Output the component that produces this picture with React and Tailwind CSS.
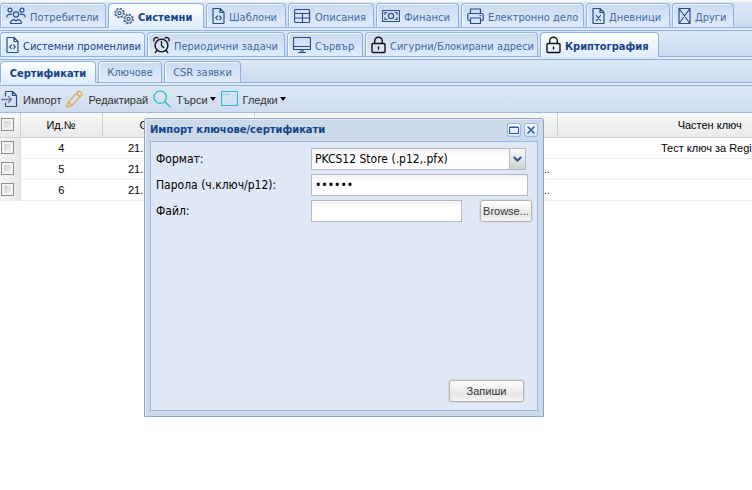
import React from "react";

const UI = "font-['DejaVu_Sans_Condensed','DejaVu_Sans',sans-serif]";
const ARIAL = "font-['Liberation_Sans',sans-serif]";

function Svg({ w, h = 18, className = "text-[#2b4e86]", children }) {
  return (
    <svg width={w} height={h} viewBox={`0 0 ${w} ${h}`} fill="none" stroke="currentColor" strokeWidth="1.2" strokeLinecap="round" strokeLinejoin="round" className={`shrink-0 ${className}`} aria-hidden="true">
      {children}
    </svg>
  );
}

const Users = () => (
  <Svg w={20}>
    <circle cx="4" cy="3.200" r="2" />
    <circle cx="16" cy="3.200" r="2" />
    <circle cx="10" cy="7.500" r="2.700" />
    <path d="M.8 10c0-2.300 1.700-3 4.700-2.800M19.200 10c0-2.300-1.700-3-4.700-2.800M4.600 16.500c0-2.700 1.700-3.700 3.400-3.900l2 1.300 2-1.300c1.700.2 3.400 1.200 3.400 3.900z" />
  </Svg>
);
const Gears = () => (
  <Svg w={20} className="text-[#4a6288]">
    <circle cx="5.500" cy="6" r="4.600" strokeWidth="1.400" strokeDasharray="2 1.610" strokeLinecap="butt" />
    <circle cx="5.500" cy="6" r="3.800" strokeWidth=".8" />
    <circle cx="5.500" cy="6" r="1.600" />
    <circle cx="14.500" cy="12" r="4.600" strokeWidth="1.400" strokeDasharray="2 1.610" strokeLinecap="butt" />
    <circle cx="14.500" cy="12" r="3.800" strokeWidth=".8" />
    <circle cx="14.500" cy="12" r="1.600" />
  </Svg>
);
const FileCode = () => (
  <Svg w={13}>
    <path d="M1.500 1.500h6.500l4 4v10.500q0 .5-.5.5h-10q-.5 0-.5-.5v-14q0-.5.5-.5zM8 1.500v4h4" />
    <path d="M5.300 9l-1.600 1.800 1.600 1.800M7.700 9l1.600 1.800-1.600 1.800" />
  </Svg>
);
const FileX = () => (
  <Svg w={13}>
    <path d="M1.500 1.500h6.500l4 4v10.500q0 .5-.5.5h-10q-.5 0-.5-.5v-14q0-.5.5-.5zM8 1.500v4h4M4.500 8.500l4 5M8.500 8.500l-4 5" />
  </Svg>
);
const TableIcon = () => (
  <Svg w={17}>
    <rect x=".5" y="2.500" width="15" height="13" rx="1" />
    <path d="M1 6.500h15M1 11h15M8.500 6.500v9" />
  </Svg>
);
const Money = () => (
  <Svg w={18}>
    <rect x=".5" y="3.500" width="17" height="11" rx=".5" />
    <circle cx="9" cy="9" r="2.600" />
    <path d="M3 7.500V5.500H5M15 7.500V5.500H13M3 10.500v2H5M15 10.500v2H13" />
  </Svg>
);
const Printer = () => (
  <Svg w={17}>
    <path d="M3.500 6.500v-4.500h10v4.500M3.500 13.500h-1.500q-1.200 0-1.200-1.200v-4.600q0-1.200 1.200-1.200h13q1.200 0 1.200 1.200v4.600q0 1.200-1.200 1.200h-1.500M3.500 11h10v5.500h-10zM13 8.700h.8" />
  </Svg>
);
const BoxX = () => (
  <Svg w={13}>
    <path d="M1 1.500h11v15h-11zM1 1.500l11 15M12 1.500l-11 15" />
  </Svg>
);
const Alarm = () => (
  <Svg w={17} className="text-[#111]">
    <circle cx="8.500" cy="9.500" r="6.400" strokeWidth="1.400" />
    <path d="M8.500 5.500v4.200l2.200 1.800M1 5a2.600 2.600 0 0 1 4-3M16 5a2.600 2.600 0 0 0-4-3M4 14.500l-1.700 2M13 14.500l1.700 2" strokeWidth="1.300" />
  </Svg>
);
const Monitor = () => (
  <Svg w={18}>
    <rect x=".5" y="1.500" width="17" height="12" rx=".5" />
    <path d="M1 10.500h16M8 13.500v2.500M10 13.500v2.500M5.500 16.500h7" />
  </Svg>
);
const Lock = () => (
  <Svg w={15} className="text-[#111]">
    <rect x="1" y="7.500" width="13" height="9" rx="1" strokeWidth="1.400" />
    <path d="M3.700 7.500v-2.500a3.800 3.800 0 0 1 7.600 0v2.500M7.500 11v2" strokeWidth="1.400" />
  </Svg>
);
const ImportIcon = () => (
  <Svg w={17}>
    <path d="M4.500 6v-4q0-.5.5-.5h6.500l4 4v10.500q0 .5-.5.500h-10q-.5 0-.5-.5v-3M11.500 1.500v4h4" />
    <path d="M.8 9.500h9.500M7.500 6.500l3 3-3 3" className="text-[#6b7d98]" stroke="currentColor" strokeWidth="1.400" />
  </Svg>
);
const Pencil = () => (
  <Svg w={17} className="text-[#e9a23b]">
    <path d="M1 17l1.300-4.800L12 1.700q1-1 2 0l1.500 1.500q1 1 0 2L5.800 15.700zM2.300 12.200l3.500 3.500M10.400 3.500l3.500 3.500" />
  </Svg>
);
const Search = () => (
  <Svg w={18} className="text-[#2bb3d3]">
    <circle cx="7.200" cy="7.200" r="6.200" />
    <path d="M11.800 11.800l5.200 5" />
  </Svg>
);
const WindowIcon = () => (
  <Svg w={17} className="text-[#2bb9d6]">
    <rect x=".5" y="1.500" width="16" height="14" rx=".5" />
    <path d="M3 4.500h.2M5.500 4.500h.2M8 4.500h.2" />
  </Svg>
);

const MAIN_TABS = [
  { label: "Потребители", Icon: Users, width: "w-[106px]" },
  { label: "Системни", Icon: Gears, width: "w-[96px]", active: true },
  { label: "Шаблони", Icon: FileCode, width: "w-[80px]" },
  { label: "Описания", Icon: TableIcon, width: "w-[86px]" },
  { label: "Финанси", Icon: Money, width: "w-[83px]" },
  { label: "Електронно дело", Icon: Printer, width: "w-[123px]" },
  { label: "Дневници", Icon: FileX, width: "w-[84px]" },
  { label: "Други", Icon: BoxX, width: "w-[62px]" },
];
const SYSTEM_TABS = [
  { label: "Системни променливи", Icon: FileCode, width: "w-[145px]", hover: true },
  { label: "Периодични задачи", Icon: Alarm, width: "w-[138px]" },
  { label: "Сървър", Icon: Monitor, width: "w-[76px]" },
  { label: "Сигурни/Блокирани адреси", Icon: Lock, width: "w-[173px]" },
  { label: "Криптография", Icon: Lock, width: "w-[119px]", active: true },
];
const CRYPTO_TABS = [
  { label: "Сертификати", width: "w-[96px]", active: true },
  { label: "Ключове", width: "w-[64px]" },
  { label: "CSR заявки", width: "w-[77px]" },
];

function Tab({ label, Icon, width, active, hover, small }) {
  const look = active
    ? "z-10 -mb-px bg-linear-to-b from-white to-[#deecfd] font-bold text-[#15428b]"
    : hover
      ? "bg-linear-to-b from-[#eaf4ff] to-[#d8eaff] text-[#15428b]"
      : "bg-linear-to-b from-[#cbdbf1] to-[#dfebfd] text-[#416aa3]";
  return (
    <button type="button" role="tab" aria-selected={!!active} className={`relative flex shrink-0 items-center gap-1 whitespace-nowrap rounded-t border border-b-0 border-[#8db2e3] pl-[5px] shadow-[inset_1px_1px_0_#f4f9ff] ${small ? "justify-center pr-[5px]" : ""} ${width} ${look}`}>
      {Icon && <Icon />}
      <span className={`text-[11px] leading-4 ${small ? "pt-[2px]" : "pt-[4px]"}`}>{label}</span>
    </button>
  );
}

function TabStrip({ tabs, height, name, small }) {
  return (
    <div>
      <div role="tablist" aria-label={name} className={`flex gap-[2px] border-b border-[#8db2e3] bg-linear-to-b from-[#dde8f5] to-[#cbdbef] pt-px ${height}`}>
        {tabs.map((t) => <Tab key={t.label} {...t} small={small} />)}
      </div>
      <div className="h-[3px] border-b border-[#8db2e3] bg-[#deecfd]" />
    </div>
  );
}

function Tool({ label, Icon, menu }) {
  return (
    <button type="button" className="flex items-center gap-[5px] whitespace-nowrap">
      <Icon />
      <span className="pt-[3px]">{label}</span>
      {menu && <span className="-ml-[3px] border-x-[3px] border-t-4 border-x-transparent border-t-black" />}
    </button>
  );
}

const CERTS = [
  { id: 4, serial: "21.", more: "", key: "Тест ключ за Regi" },
  { id: 5, serial: "21.", more: "...", key: "" },
  { id: 6, serial: "21.", more: "...", key: "" },
];
const CHECK = "block size-[13px] appearance-none border border-[#8e8f8f] bg-linear-to-br from-[#c4c9d0] to-[#fafafa] shadow-[inset_0_0_0_2px_#f4f4f4]";

function CertTable() {
  const th = "border-r border-b border-[#d0d0d0] font-normal";
  return (
    <div className="overflow-hidden">
      <table className="w-[863px] table-fixed border-collapse text-[11px] leading-4 text-black">
        <colgroup>
          <col className="w-[20px]" />
          <col className="w-[82px]" />
          <col className="w-[152px]" />
          <col className="w-[303px]" />
          <col />
        </colgroup>
        <thead>
          <tr className="h-[24px] bg-linear-to-b from-[#f9f9f9] to-[#e8eaec]">
            <th className={th}><input type="checkbox" aria-label="Избери всички" className={`${CHECK} ml-px`} /></th>
            <th className={th}>Ид.№</th>
            <th className={`${th} pl-[37px] text-left`}>С</th>
            <th className={th} />
            <th className={th}>Частен ключ</th>
          </tr>
        </thead>
        <tbody>
          {CERTS.map((c) => (
            <tr key={c.id} className="h-[21px] border-b border-[#ededed] text-center">
              <td className="border-r border-[#dcdcdc] bg-linear-to-r from-[#f7f7f7] to-[#e6e6e6]">
                <input type="checkbox" aria-label={`Избери ${c.id}`} className={`${CHECK} ml-px`} />
              </td>
              <td>{c.id}</td>
              <td className="pl-[26px] text-left">{c.serial}</td>
              <td className="pr-[7px] text-right">{c.more}</td>
              <td className="pl-[104px] text-left">{c.key}</td>
            </tr>
          ))}
        </tbody>
      </table>
    </div>
  );
}

const FIELD = "h-[22px] border border-[#b5b8c8] bg-linear-to-b from-[#f2f2f2] to-white to-30% px-[3px] text-black outline-none";
const BUTTON = `h-[22px] rounded-[3px] border border-[#b5b5b5] bg-linear-to-b from-white from-0% via-[#e6e6e6] via-65% to-[#f4f4f4] text-[11px] text-[#333] shadow-[0_0_0_1px_#d8d8d8] ${ARIAL}`;
const TOOL = "flex size-[14px] items-center justify-center rounded-[3px] border border-[#94b8e6] bg-linear-to-b from-white to-[#cfe2fb] text-[#2d58a0]";

function ImportDialog() {
  return (
    <section role="dialog" aria-labelledby="dialog-title" className={`absolute top-[118px] left-[144px] z-20 flex h-[299px] w-[400px] flex-col rounded-t-[3px] border border-[#8ea4c1] bg-[#ccd9e8] px-[5px] pb-[5px] shadow-[inset_1px_1px_0_#e6eefa] ${UI}`}>
      <header className="flex h-[22px] items-center gap-[3px]">
        <h2 id="dialog-title" className="flex-1 text-[11px] font-bold text-[#15428b]">Импорт ключове/сертификати</h2>
        <button type="button" aria-label="Увеличи" className={TOOL}>
          <svg width="10" height="8" viewBox="0 0 10 8" fill="none" stroke="currentColor" aria-hidden="true"><path d="M.5 1h9v6.500h-9zM.5 1.500h9" /></svg>
        </button>
        <button type="button" aria-label="Затвори" className={TOOL}>
          <svg width="8" height="8" viewBox="0 0 8 8" fill="none" stroke="currentColor" strokeWidth="1.500" aria-hidden="true"><path d="M.5.5l7 7M7.500.5l-7 7" /></svg>
        </button>
      </header>
      <form onSubmit={(e) => e.preventDefault()} className="flex flex-1 flex-col border border-[#99bbe8] bg-[#dfe8f6] px-[5px] pt-[6px] pb-[8px] text-[12px] text-black">
        <div className="grid grid-cols-[155px_1fr] gap-y-1">
          <label htmlFor="format" className="leading-[22px]">Формат:</label>
          <div className="relative w-[215px]">
            <select id="format" className={`${FIELD} w-full appearance-none`}>
              <option>PKCS12 Store (.p12,.pfx)</option>
            </select>
            <span className="pointer-events-none absolute inset-y-0 right-0 flex w-[17px] items-center justify-center border border-[#b5b8c8] bg-linear-to-b from-[#fafafa] to-[#d0d0d0]">
              <svg width="9" height="6" viewBox="0 0 9 6" fill="none" stroke="#2d4f8b" strokeWidth="2" aria-hidden="true"><path d="M.8 1l3.700 3.500L8.200 1" /></svg>
            </span>
          </div>
          <label htmlFor="password" className="leading-[22px]">Парола (ч.ключ/p12):</label>
          <input id="password" type="password" defaultValue="123456" className={`${FIELD} w-[217px]`} />
          <label htmlFor="file" className="leading-[22px]">Файл:</label>
          <div className="flex gap-[18px]">
            <input id="file" type="text" readOnly className={`${FIELD} w-[151px]`} />
            <button type="button" className={`${BUTTON} w-[52px] whitespace-nowrap`}>Browse...</button>
          </div>
        </div>
        <div className="mt-auto flex justify-end pr-[8px]">
          <button type="submit" className={`${BUTTON} w-[75px]`}>Запиши</button>
        </div>
      </form>
    </section>
  );
}

export default function App() {
  return (
    <main className={`relative min-h-screen overflow-hidden bg-white ${UI}`}>
      <div className="h-[2px] bg-[#f6f6f6]" />
      <TabStrip tabs={MAIN_TABS} height="h-[26px]" name="Раздели" />
      <TabStrip tabs={SYSTEM_TABS} height="h-[26px]" name="Системни" />
      <TabStrip tabs={CRYPTO_TABS} height="h-[23px]" name="Криптография" small />
      <div role="toolbar" className={`flex h-[27px] items-center gap-[5px] border-b border-[#99bbe8] bg-linear-to-b from-[#dce7f4] to-[#cddcef] px-px text-[11px] text-[#333] ${ARIAL}`}>
        <Tool label="Импорт" Icon={ImportIcon} />
        <Tool label="Редактирай" Icon={Pencil} />
        <Tool label="Търси" Icon={Search} menu />
        <Tool label="Гледки" Icon={WindowIcon} menu />
      </div>
      <div className={ARIAL}><CertTable /></div>
      <ImportDialog />
    </main>
  );
}
